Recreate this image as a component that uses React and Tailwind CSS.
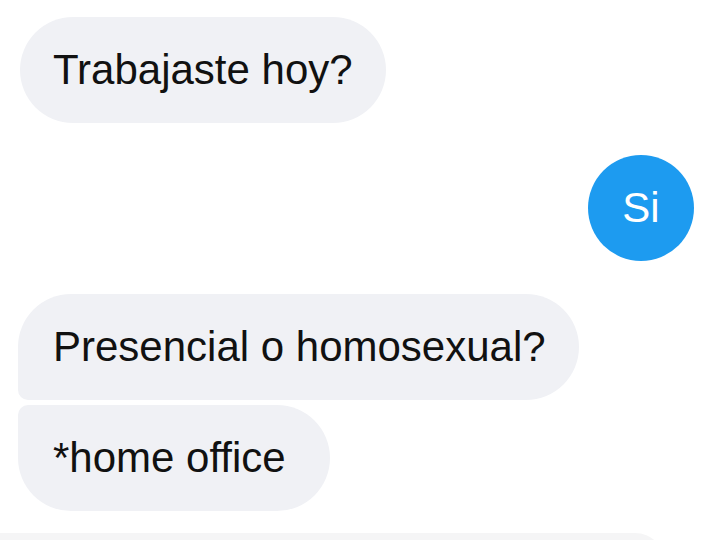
export default function App() {
  return (
    <div className="w-[720px] h-[540px] overflow-hidden bg-white flex flex-col font-['Liberation_Sans',Arial,sans-serif] text-[42px] leading-none text-[#111111]">
      {/* first incoming message */}
      <div className="pt-[17px] pl-[20px] flex">
        <div className="h-[106px] w-[366px] pl-[33px] flex items-center rounded-[53px] bg-[#f0f1f5]">
          Trabajaste hoy?
        </div>
      </div>

      {/* outgoing reply */}
      <div className="mt-[32px] pr-[26px] flex justify-end">
        <div className="w-[106px] h-[106px] rounded-full bg-[#1d9bf0] flex items-center justify-center text-white">
          Si
        </div>
      </div>

      {/* grouped incoming messages */}
      <div className="mt-[33px] pl-[18px] flex flex-col items-start gap-[5px]">
        <div className="h-[106px] w-[561px] pl-[35px] flex items-center rounded-[53px] rounded-bl-[10px] bg-[#f0f1f5]">
          Presencial o homosexual?
        </div>
        <div className="h-[106px] w-[312px] pl-[35px] flex items-center rounded-[53px] rounded-tl-[10px] bg-[#f0f1f5]">
          *home office
        </div>
      </div>

      {/* next message peeking in */}
      <div className="mt-[22px] h-[30px] w-[665px] shrink-0 bg-[#f5f5f6] rounded-tr-[40px]" />
    </div>
  );
}
